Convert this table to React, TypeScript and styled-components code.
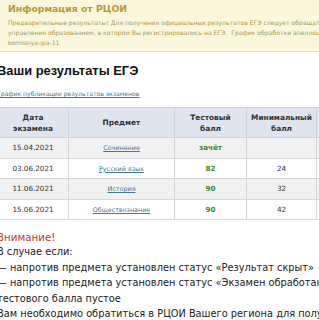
import styled, { createGlobalStyle } from "styled-components";

const GlobalStyle = createGlobalStyle`
    html, body {
        margin: 0;
        padding: 0;
        background: #ffffff;
        overflow: hidden;
    }
`;

const Page = styled.div`
    width: 340px;
    margin-left: -3px;
    font-family: "DejaVu Sans", Verdana, sans-serif;
    color: #222;
`;

const Notice = styled.div`
    background-color: #fcf6dc;
    border-bottom: 1px solid #ece2b8;
    padding: 3px 0 6px 11px;
    height: 42px;
`;

const NoticeTitle = styled.div`
    font-size: 9.3px;
    font-weight: bold;
    color: #b79b2c;
    line-height: 12px;
    margin-bottom: 3px;
`;

const NoticeText = styled.div`
    font-size: 6.1px;
    line-height: 10px;
    color: #a99a52;
    white-space: nowrap;
`;

const Heading = styled.h2`
    font-family: "Liberation Sans", Arial, sans-serif;
    font-size: 12.9px;
    font-weight: bold;
    color: #111;
    margin: 10px 0 0 0;
    line-height: 17px;
`;

const ScheduleLink = styled.a`
    display: block;
    margin-top: 10px;
    font-size: 6.1px;
    line-height: 9px;
    color: #3c7a96;
    text-decoration: underline;
`;

const Table = styled.table`
    margin-top: 9px;
    border-collapse: collapse;
    font-size: 7.2px;
    table-layout: fixed;
    width: 380px;
`;

const HeadCell = styled.th<{ $w: number }>`
    width: ${p => p.$w}px;
    height: 29px;
    background-color: #dfe4ee;
    color: #333;
    font-size: 7.4px;
    font-weight: bold;
    line-height: 11px;
    text-align: center;
    border: 1px solid #cfd3da;
    padding: 0;
`;

const Row = styled.tr<{ $shade: boolean }>`
    background-color: ${p => (p.$shade ? "#f1f1f1" : "#ffffff")};
`;

const Cell = styled.td`
    height: 19.5px;
    text-align: center;
    color: #333;
    border: 1px solid #d6d6d6;
    padding: 0;
`;

const SubjectLink = styled.a`
    color: #3c7a96;
    font-size: 6.4px;
    text-decoration: underline;
`;

const Score = styled.span`
    color: #3b8a2c;
    font-weight: bold;
`;

const Warning = styled.div`
    margin-top: 10px;
    font-size: 9.8px;
    line-height: 15.5px;
    color: #222;
    white-space: nowrap;
`;

const WarningTitle = styled.div`
    color: #c0392b;
    font-size: 10.3px;
    line-height: 14px;
`;

const rows = [
    { date: "15.04.2021", subject: "Сочинение", score: "зачёт", min: "" },
    { date: "03.06.2021", subject: "Русский язык", score: "82", min: "24" },
    { date: "11.06.2021", subject: "История", score: "90", min: "32" },
    { date: "15.06.2021", subject: "Обществознание", score: "90", min: "42" },
];

function App() {
    return (
        <>
            <GlobalStyle />
            <Page>
                <Notice>
                    <NoticeTitle>Информация от РЦОИ</NoticeTitle>
                    <NoticeText>
                        Предварительные результаты! Для получения официальных результатов ЕГЭ следует обращаться в органы
                    </NoticeText>
                    <NoticeText>
                        управления образованием, в котором Вы регистрировались на ЕГЭ.&nbsp; График обработки апелляций
                    </NoticeText>
                    <NoticeText>komissiya-gia-11</NoticeText>
                </Notice>

                <Heading>Ваши результаты ЕГЭ</Heading>
                <ScheduleLink href="#">График публикации результатов экзаменов</ScheduleLink>

                <Table>
                    <thead>
                        <tr>
                            <HeadCell $w={70}>
                                Дата
                                <br />
                                экзамена
                            </HeadCell>
                            <HeadCell $w={105}>Предмет</HeadCell>
                            <HeadCell $w={71}>
                                Тестовый
                                <br />
                                балл
                            </HeadCell>
                            <HeadCell $w={69}>
                                Минимальный
                                <br />
                                балл
                            </HeadCell>
                            <HeadCell $w={65}></HeadCell>
                        </tr>
                    </thead>
                    <tbody>
                        {rows.map((r, i) => (
                            <Row key={r.date} $shade={i % 2 === 0}>
                                <Cell>{r.date}</Cell>
                                <Cell>
                                    <SubjectLink href="#">{r.subject}</SubjectLink>
                                </Cell>
                                <Cell>
                                    <Score>{r.score}</Score>
                                </Cell>
                                <Cell>{r.min}</Cell>
                                <Cell></Cell>
                            </Row>
                        ))}
                    </tbody>
                </Table>

                <Warning>
                    <WarningTitle>Внимание!</WarningTitle>
                    <div>В случае если:</div>
                    <div>— напротив предмета установлен статус «Результат скрыт»</div>
                    <div>— напротив предмета установлен статус «Экзамен обработан», а поле</div>
                    <div>тестового балла пустое</div>
                    <div>Вам необходимо обратиться в РЦОИ Вашего региона для получения</div>
                </Warning>
            </Page>
        </>
    );
}

export default App;
